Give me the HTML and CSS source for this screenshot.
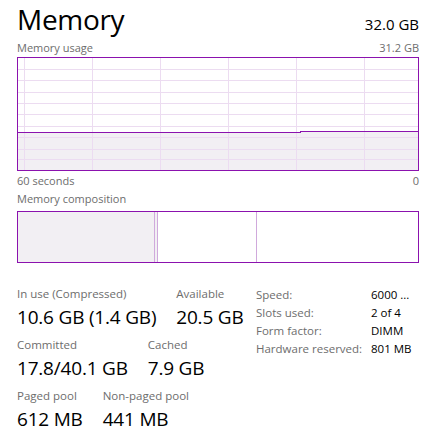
FILE: index.html
```html
<!DOCTYPE html>
<html>
<head>
<meta charset="utf-8">
<link rel="stylesheet" href="styles.css">
</head>
<body>
<div class="page">
  <header class="head">
    <h1 class="title">Memory</h1>
    <span class="total">32.0 GB</span>
  </header>
  <div class="cap cap-top"><span>Memory usage</span><span>31.2 GB</span></div>
  <div class="graph">
    <svg class="graph-svg" width="400" height="112" viewBox="0 0 400 112" shape-rendering="crispEdges">
      <path class="fill" d="M0 74 L282 74 L282 73 L400 73 L400 112 L0 112 Z"/>
      <g class="grid">
        <line x1="6.5" y1="0" x2="6.5" y2="112"/>
        <line x1="74.5" y1="0" x2="74.5" y2="112"/>
        <line x1="142.5" y1="0" x2="142.5" y2="112"/>
        <line x1="210.5" y1="0" x2="210.5" y2="112"/>
        <line x1="278.5" y1="0" x2="278.5" y2="112"/>
        <line x1="346.5" y1="0" x2="346.5" y2="112"/>
        <line x1="0" y1="11.5" x2="400" y2="11.5"/>
        <line x1="0" y1="22.5" x2="400" y2="22.5"/>
        <line x1="0" y1="34.5" x2="400" y2="34.5"/>
        <line x1="0" y1="45.5" x2="400" y2="45.5"/>
        <line x1="0" y1="56.5" x2="400" y2="56.5"/>
        <line x1="0" y1="68.5" x2="400" y2="68.5"/>
        <line x1="0" y1="79.5" x2="400" y2="79.5"/>
        <line x1="0" y1="91.5" x2="400" y2="91.5"/>
        <line x1="0" y1="101.5" x2="400" y2="101.5"/>
      </g>
      <path class="data" d="M0 74.5 L282 74.5 L282 73.5 L400 73.5"/>
    </svg>
  </div>
  <div class="cap cap-axis"><span>60 seconds</span><span>0</span></div>
  <div class="cap cap-comp"><span>Memory composition</span></div>
  <div class="comp">
    <svg class="comp-svg" width="400" height="50" viewBox="0 0 400 50" shape-rendering="crispEdges">
      <rect class="inuse" x="0" y="0" width="139" height="50"/>
      <line class="seg" x1="136.5" y1="0" x2="136.5" y2="50"/>
      <line class="seg" x1="139.5" y1="0" x2="139.5" y2="50"/>
      <line class="seg" x1="238.5" y1="0" x2="238.5" y2="50"/>
    </svg>
  </div>
  <section class="stats">
    <div class="stats-left">
      <div class="row">
        <div class="stat"><div class="label">In use (Compressed)</div><div class="value">10.6 GB (1.4 GB)</div></div>
        <div class="stat"><div class="label">Available</div><div class="value">20.5 GB</div></div>
      </div>
      <div class="row">
        <div class="stat"><div class="label">Committed</div><div class="value">17.8/40.1 GB</div></div>
        <div class="stat"><div class="label">Cached</div><div class="value">7.9 GB</div></div>
      </div>
      <div class="row">
        <div class="stat"><div class="label">Paged pool</div><div class="value">612 MB</div></div>
        <div class="stat"><div class="label">Non-paged pool</div><div class="value">441 MB</div></div>
      </div>
    </div>
    <dl class="specs">
      <dt>Speed:</dt><dd>6000 ...</dd>
      <dt>Slots used:</dt><dd>2 of 4</dd>
      <dt>Form factor:</dt><dd>DIMM</dd>
      <dt>Hardware reserved:</dt><dd>801 MB</dd>
    </dl>
  </section>
</div>
</body>
</html>
```

FILE: styles.css
```css
html, body {
  margin: 0;
  padding: 0;
  background: #ffffff;
}
body {
  font-family: "Open Sans", "Noto Sans", sans-serif;
  color: #000;
  width: 428px;
  height: 446px;
  overflow: hidden;
}
.page {
  padding: 0 9px 0 17px;
}
.head {
  display: flex;
  justify-content: space-between;
  align-items: baseline;
  height: 40px;
}
.title {
  margin: 0;
  font-weight: 400;
  font-size: 28px;
  line-height: 38px;
  letter-spacing: -0.3px;
}
.total {
  font-size: 15px;
}
.cap {
  display: flex;
  justify-content: space-between;
  font-size: 11px;
  color: #6d6d6d;
  line-height: 15px;
}
.cap-top {
  height: 17px;
}
.graph {
  border: 1px solid #8b12ae;
  height: 112px;
}
.graph-svg, .comp-svg {
  display: block;
}
.grid line {
  stroke: #ecdcf1;
  stroke-width: 1;
}
.fill {
  fill: #f2eff3;
}
.data {
  fill: none;
  stroke: #8b12ae;
  stroke-width: 1;
}
.cap-axis {
  padding-top: 2px;
  height: 17px;
}
.cap-comp {
  padding-top: 1px;
  height: 20px;
}
.comp {
  border: 1px solid #8b12ae;
  height: 50px;
}
.inuse {
  fill: #f2eff3;
}
.seg {
  stroke: #d0a9dc;
  stroke-width: 1;
}
.stats {
  display: grid;
  grid-template-columns: 239px 1fr;
  align-items: start;
  margin-top: 23px;
}
.row {
  display: flex;
  gap: 20px;
  margin-bottom: 5px;
}
.label {
  font-size: 11.5px;
  color: #6d6d6d;
  line-height: 16px;
}
.value {
  font-size: 19px;
  line-height: 30px;
  letter-spacing: -0.2px;
}
.specs {
  margin: 0;
  display: grid;
  grid-template-columns: 115px 1fr;
  align-content: start;
  font-size: 11.5px;
  line-height: 18px;
}
.specs dt {
  color: #6d6d6d;
}
.specs dd {
  margin: 0;
}
```
